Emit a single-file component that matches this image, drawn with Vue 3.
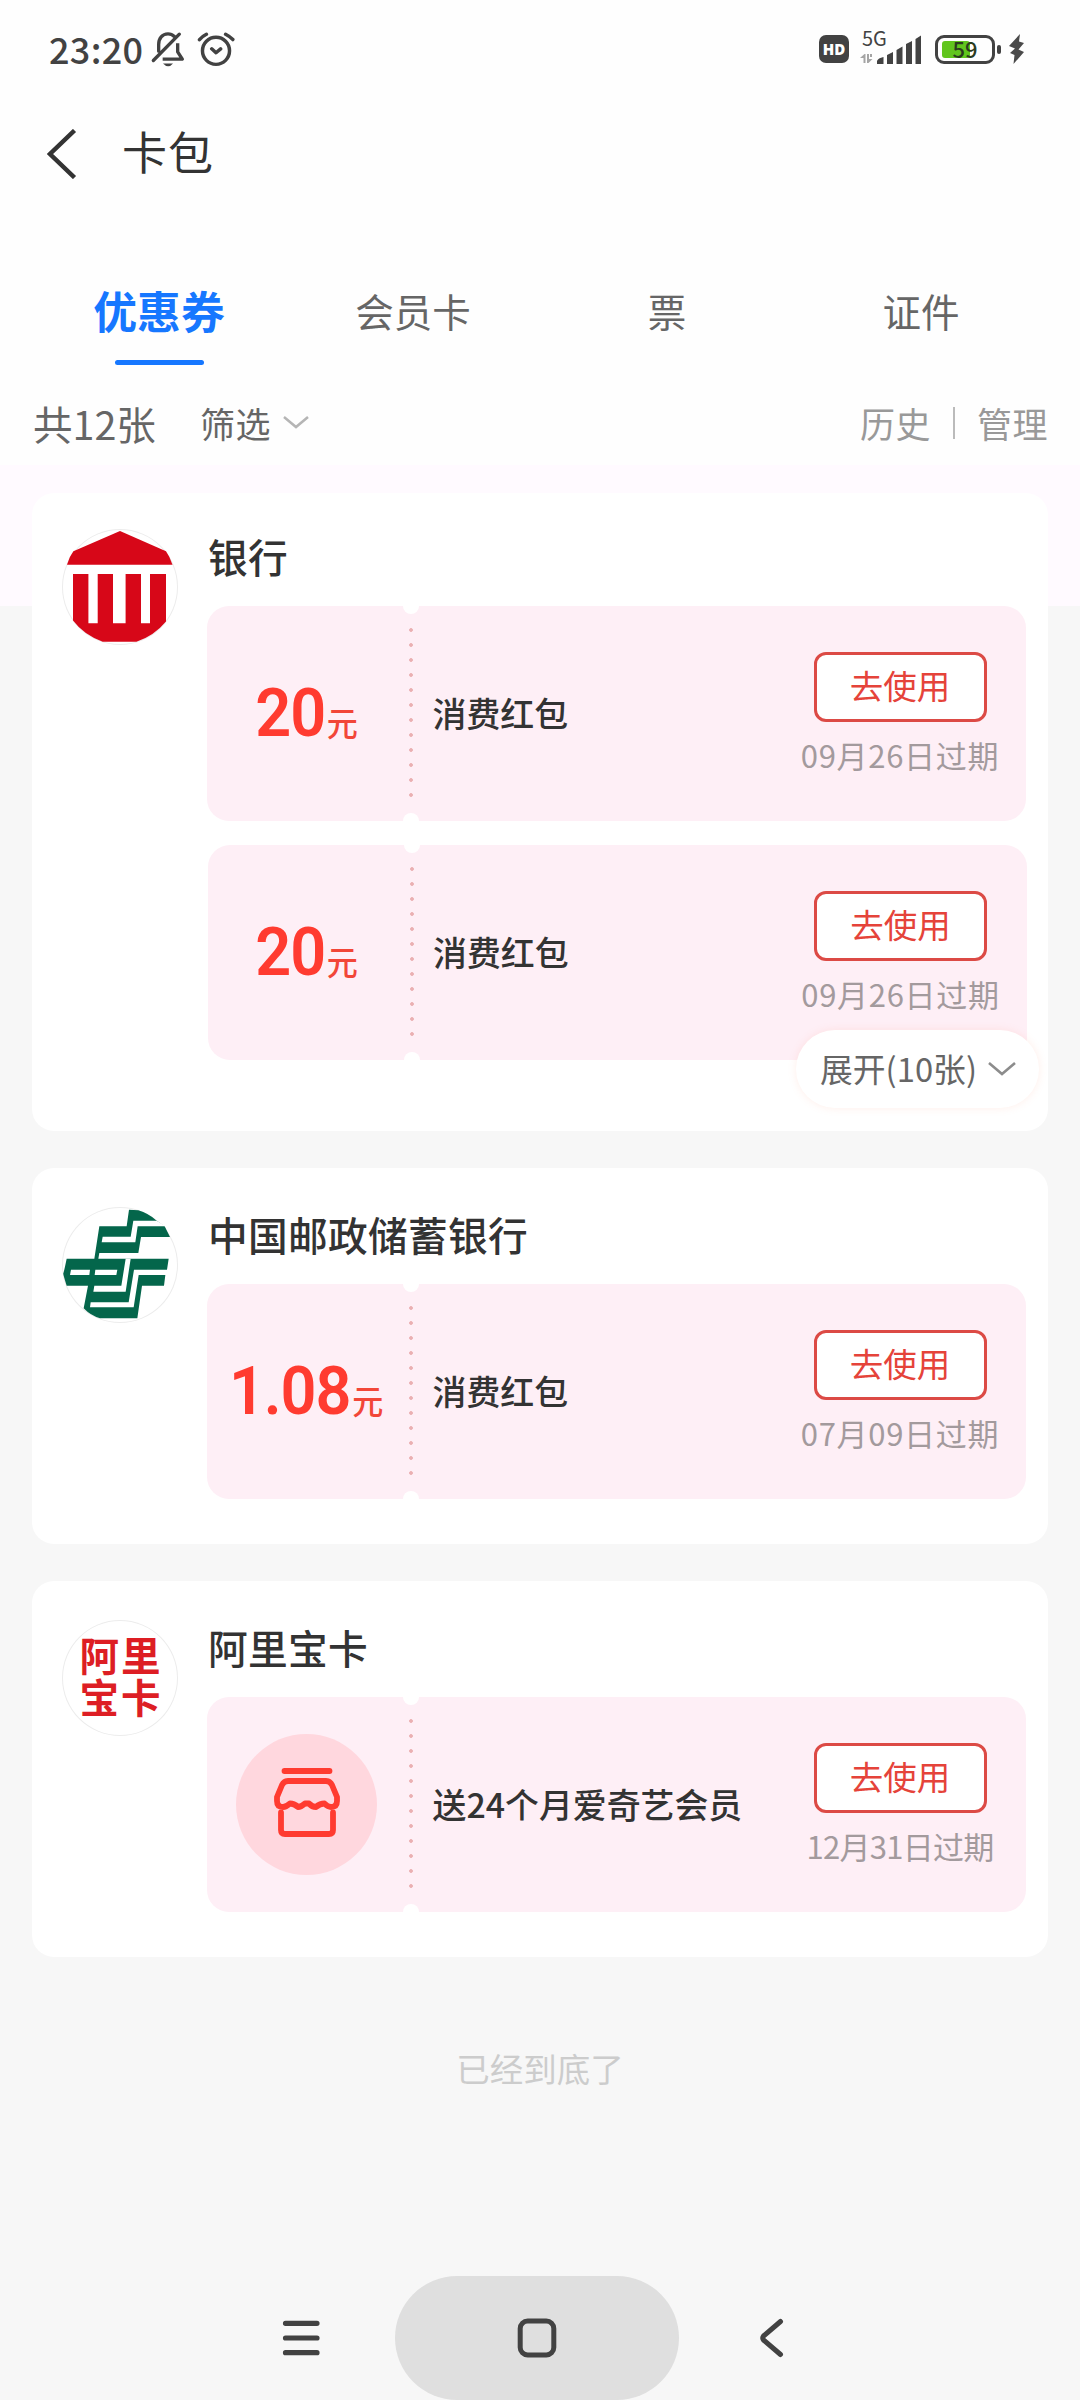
<script setup>
const tabs = ['优惠券', '会员卡', '票', '证件']
const groups = [
  {
    logo: 'bank',
    name: '银行',
    more: '展开(10张)',
    coupons: [
      { amount: '20', title: '消费红包', expire: '09月26日过期' },
      { amount: '20', title: '消费红包', expire: '09月26日过期' },
    ],
  },
  {
    logo: 'post',
    name: '中国邮政储蓄银行',
    coupons: [{ amount: '1.08', title: '消费红包', expire: '07月09日过期' }],
  },
  {
    logo: 'ali',
    name: '阿里宝卡',
    coupons: [{ title: '送24个月爱奇艺会员', expire: '12月31日过期', tight: true }],
  },
]
</script>

<template>
  <div class="screen">
    <header class="status">
      <span class="clock">23:20</span>
      <svg class="bell" viewBox="15 20 105 110" fill="none" stroke="#424242" stroke-width="10" stroke-linecap="round" stroke-linejoin="round">
        <path d="M41 80V60C41 41 52 28 69 28Q80 28 88 36M25 108L103 29" />
        <path d="M98 56V82L112 104H53" stroke-linecap="butt" />
        <path d="M54 117H84Q70 134 54 117Z" fill="#424242" stroke="none" />
      </svg>
      <svg class="alarm" viewBox="156 20 114 106" fill="none" stroke="#424242" stroke-width="10.500" stroke-linecap="round" stroke-linejoin="round">
        <circle cx="213" cy="77" r="41" />
        <path d="M163 43Q172 33 184 27M242 27Q254 33 264 43M200 71L213 83L227 71" />
      </svg>
      <span class="spacer"></span>
      <span class="hd">HD</span>
      <span class="signal">
        <span class="gen">5G</span>
        <svg viewBox="0 0 62 32" width="62" height="32">
          <g fill="#a5a5a5">
            <path d="M0 25L4.500 21H5.500V30H3.500V25ZM7 21H9V26H12.500L8.500 30H7ZM10 21H12V24H10Z" />
          </g>
          <g fill="#424242">
            <path d="M17 28Q18 25 23.500 24V31H17ZM27 22L33 19V31H27ZM36.500 17L42.500 13.500V31H36.500ZM46 11L52 8V31H46ZM55.500 6L61 2.500V31H55.500Z" />
          </g>
        </svg>
      </span>
      <span class="battery"><span class="charge"></span><span class="percent">59</span></span>
      <span class="nub"></span>
      <svg class="bolt" viewBox="0 0 18 30" fill="#4a4a4a"><path d="M12 0L1 12L7 14.500L2 19L6.500 21L5.500 30L16 18L10.500 15.500L16 9L11 7.500Z" /></svg>
    </header>

    <nav class="titlebar">
      <svg class="back" viewBox="0 0 30 50" fill="none" stroke="#333" stroke-width="4.500"><path d="M27.500 1.500L3 25L27.500 48.500" /></svg>
      <h1>卡包</h1>
    </nav>

    <div class="tabs">
      <div v-for="(tab, i) in tabs" :key="tab" class="tab" :class="{ active: i === 0 }">
        <span>{{ tab }}</span>
      </div>
    </div>

    <div class="filter">
      <span class="total">共12张</span>
      <span class="pick">筛选</span>
      <svg class="caret" viewBox="0 0 26 13" fill="none" stroke="#b5b5b5" stroke-width="2.500"><path d="M1 1L13 11L25 1" /></svg>
      <span class="spacer"></span>
      <span class="link">历史</span>
      <span class="bar"></span>
      <span class="link">管理</span>
    </div>

    <main class="list">
      <section v-for="group in groups" :key="group.name" class="card" :class="{ multi: group.more }">
        <div class="logo">
          <svg v-if="group.logo === 'bank'" viewBox="0 0 116 116" fill="#d70718">
            <path d="M58 2L104 22.300Q108 28 110.500 35.700H5Q7 28 11.400 22.300Z" />
            <path d="M11 45H26.400V94.300H35.700V45H51V94.300H63.600V45H79V94.300H88V45H104V92.500Q92 107 74.500 112.700H40.700Q22 106 11 91.500Z" />
          </svg>
          <svg v-else-if="group.logo === 'post'" viewBox="6 6 348 348">
            <path fill="#04664b" d="M207 14L235 16Q265 25 290 47L314 64L330 96H243L235 144H118L115 161H326L321 194L316 210L312 242H246L232 340H120Q92 332 71 310L84 242H20Q8 205 10 205Q12 200 20 161H103L118 64H200Z" />
            <g fill="#fff">
              <path d="M290 47H220L212 95H128L125 112H226L233 64H318Z" />
              <path d="M197 161H212L197 260H100L103 242H184Z" />
              <path d="M325 194H222L206 292H92L90 307H221L236 210H325Z" />
              <path d="M33 194H90L88 210H30ZM106 194H172L169 210H104Z" />
            </g>
          </svg>
          <span v-else class="wordmark"><span>阿里</span><span>宝卡</span></span>
        </div>
        <div class="content">
          <h2>{{ group.name }}</h2>
          <div class="coupons">
            <article v-for="(coupon, i) in group.coupons" :key="i" class="coupon">
              <div class="value">
                <div v-if="coupon.amount" class="price">
                  <span class="amount">{{ coupon.amount }}</span><span class="unit">元</span>
                </div>
                <span v-else class="shop">
                  <svg viewBox="0 0 70 74" width="70" height="74" fill="none" stroke="#ff3b30" stroke-width="5.800" stroke-linecap="round" stroke-linejoin="round">
                    <path d="M12.500 3H57.500" />
                    <path d="M16 13H54Q58 13 60 17L65 29V33Q65 39 59 39Q56 39 52.500 35.500Q48 35.500 44 39Q40 39 37 35.500H33Q29 39 26 39Q22 35.500 18 35.500Q14 39 11 39Q5 39 5 33V29L10 17Q12 13 16 13Z" />
                    <path d="M9 44.500V62Q9 66 13 66H57Q61 66 61 62V44.500" />
                  </svg>
                </span>
              </div>
              <div class="dots"></div>
              <div class="title">{{ coupon.title }}</div>
              <div class="action">
                <button type="button">去使用</button>
                <span class="expire" :class="{ tight: coupon.tight }">{{ coupon.expire }}</span>
              </div>
            </article>
          </div>
        </div>
        <div v-if="group.more" class="more">
          <span>{{ group.more }}</span>
          <svg viewBox="0 0 28 14" width="28" height="14" fill="none" stroke="#8c8c8c" stroke-width="2.600"><path d="M1 1L14 12L27 1" /></svg>
        </div>
      </section>
      <p class="end">已经到底了</p>
    </main>

    <footer class="sysnav">
      <svg viewBox="0 0 38 40" width="38" height="40" fill="none" stroke="#424242" stroke-width="5.200" stroke-linecap="round"><path d="M3.500 5.300H35M3.500 20H35M3.500 34.700H35" /></svg>
      <div class="home">
        <svg viewBox="0 0 40 40" width="40" height="40" fill="none" stroke="#424242" stroke-width="5"><rect x="3.200" y="3" width="33.600" height="34" rx="7.500" /></svg>
      </div>
      <svg viewBox="0 0 25 40" width="25" height="40" fill="none" stroke="#424242" stroke-width="5" stroke-linecap="round" stroke-linejoin="round"><path d="M21.500 3.500L4.500 18Q3 20 4.500 22L21.500 36.500" /></svg>
    </footer>
  </div>
</template>

<style>
body {
  margin: 0;
}
</style>

<style scoped>
.screen {
  box-sizing: border-box;
  display: flex;
  flex-direction: column;
  width: 1080px;
  height: 2400px;
  overflow: hidden;
  background: #fefefe;
  color: #333;
  font-family: "Noto Sans CJK SC", sans-serif;
}
.spacer {
  flex: 1;
}
.status {
  display: flex;
  align-items: center;
  height: 98px;
  padding: 0 54px 0 49px;
  color: #424242;
}
.clock {
  width: 101px;
  padding-bottom: 3px;
  font-size: 36px;
  font-weight: 500;
  letter-spacing: 0.3px;
}
.bell {
  width: 35px;
  height: 37px;
}
.alarm {
  width: 38px;
  height: 35px;
  margin-left: 12px;
}
.hd {
  width: 30px;
  height: 28px;
  border-radius: 7px;
  background: #424242;
  color: #fff;
  font: 800 15px/28px "Open Sans", sans-serif;
  text-align: center;
}
.signal {
  position: relative;
  width: 62px;
  height: 32px;
  margin-left: 11px;
}
.gen {
  position: absolute;
  left: 2px;
  top: -6px;
  font-size: 20px;
  line-height: 22px;
}
.battery {
  position: relative;
  box-sizing: border-box;
  width: 60px;
  height: 29px;
  margin-left: 13px;
  padding: 3px 4px;
  border: 3px solid #424242;
  border-radius: 9px;
}
.charge {
  display: block;
  width: 28px;
  height: 17px;
  border-radius: 3px;
  background: #61c51d;
}
.percent {
  position: absolute;
  inset: 0;
  color: #2b3b1e;
  font: 500 22px/21px "Noto Sans CJK SC", sans-serif;
  text-align: center;
}
.nub {
  width: 4px;
  height: 9px;
  margin-left: 2px;
  border-radius: 2px;
  background: #424242;
}
.bolt {
  width: 18px;
  height: 30px;
  margin-left: 7px;
}
.titlebar {
  display: flex;
  align-items: center;
  height: 112px;
  padding-left: 47px;
}
.back {
  width: 30px;
  height: 50px;
}
h1 {
  margin: 0 0 6px 45px;
  font-size: 45px;
  font-weight: 400;
  line-height: 60px;
  letter-spacing: 1px;
}
.tabs {
  display: flex;
  height: 161px;
  padding: 0 32px;
  align-items: flex-end;
}
.tab {
  box-sizing: border-box;
  display: flex;
  flex: 1;
  flex-direction: column;
  align-items: center;
  height: 98px;
  color: #666;
  font-size: 38.5px;
  line-height: 75px;
}
.tab.active {
  color: #1677ff;
  font-size: 43.8px;
  font-weight: 700;
}
.tab.active::after {
  width: 89px;
  height: 5px;
  margin-top: 12px;
  border-radius: 3px;
  background: #1677ff;
  content: "";
}
.filter {
  display: flex;
  align-items: center;
  height: 94px;
  box-sizing: border-box;
  padding: 9px 32px 0 33px;
  color: #666;
  font-size: 35px;
  line-height: 60px;
}
.total {
  width: 167px;
  font-size: 39.5px;
}
.pick {
  letter-spacing: 0.5px;
}
.caret {
  width: 26px;
  height: 13px;
  margin: 0 0 0 12px;
}
.link {
  color: #999;
  letter-spacing: 0.5px;
}
.bar {
  width: 2px;
  height: 32px;
  margin: 0 22px;
  background: #bbb;
}
.list {
  flex: 1;
  display: flex;
  flex-direction: column;
  gap: 37px;
  padding: 28px 32px 0;
  background: linear-gradient(#fffaff 141px, #f7f7f7 141px);
}
.card {
  position: relative;
  box-sizing: border-box;
  display: flex;
  height: 376px;
  padding: 39px 22px 0 30px;
  border-radius: 22px;
  background: #fff;
}
.card.multi {
  height: 638px;
  padding-top: 36px;
}
.logo {
  position: relative;
  display: flex;
  flex: none;
  align-items: center;
  justify-content: center;
  width: 116px;
  height: 116px;
  border-radius: 50%;
  box-shadow: inset 0 0 0 1px #ececec;
}
.logo svg {
  width: 116px;
  height: 116px;
}
.wordmark {
  display: flex;
  flex-direction: column;
  padding: 0 0 1px 2px;
  color: #dd1e24;
  font-family: "Liberation Sans", "Noto Sans CJK SC", sans-serif;
  font-size: 39.5px;
  font-weight: 700;
  letter-spacing: 2px;
}
.wordmark span {
  height: 42px;
  line-height: 42px;
}
.content {
  flex: 1;
  margin-left: 29px;
}
h2 {
  height: 77px;
  margin: 0 0 0 1px;
  font-size: 39.7px;
  font-weight: 500;
  line-height: 54px;
  letter-spacing: 0.3px;
}
.coupons {
  display: flex;
  flex-direction: column;
  gap: 24px;
}
.coupon {
  position: relative;
  display: flex;
  align-items: center;
  height: 215px;
  border-radius: 22px;
  background: #feeff6;
}
.coupon + .coupon {
  left: 0.5px;
}
.coupon::before,
.coupon::after {
  position: absolute;
  left: 196px;
  width: 16px;
  height: 16px;
  border-radius: 50%;
  background: #fff;
  content: "";
}
.coupon::before {
  top: -8px;
}
.coupon::after {
  bottom: -8px;
}
.value {
  display: flex;
  align-items: center;
  justify-content: center;
  width: 202px;
}
.price {
  display: flex;
  align-items: baseline;
  margin-left: -3px;
  padding-bottom: 2px;
  color: #ff3b30;
  white-space: nowrap;
  transform: scaleX(0.94);
}
.amount {
  font: 600 67px/80px Roboto, sans-serif;
  letter-spacing: -1.2px;
}
.unit {
  margin-left: 2px;
  color: #f24638;
  font-size: 33px;
  font-weight: 500;
  line-height: 40px;
}
.shop {
  display: flex;
  align-items: center;
  justify-content: center;
  width: 141px;
  height: 141px;
  margin-left: -3px;
  border-radius: 50%;
  background: #ffd7de;
}
.dots {
  width: 4px;
  height: 182px;
  background: radial-gradient(circle at 2px 7px, #eab0b2 1.5px, transparent 2.2px) 0 0 / 4px 15px;
}
.title {
  flex: 1;
  margin: 0 0 3px 19.5px;
  font-size: 33.9px;
  font-weight: 500;
}
.action {
  display: flex;
  flex-direction: column;
  align-items: center;
  width: 200px;
  margin: 0 26px 0 0;
}
button {
  box-sizing: border-box;
  width: 173px;
  height: 70px;
  padding: 0 0 3px;
  border: 3px solid #dc4a45;
  border-radius: 12px;
  background: #fff;
  color: #e5433a;
  font: 400 33.5px/60px "Noto Sans CJK SC", sans-serif;
}
.expire {
  margin: 13px 0 1px;
  color: #a39a9d;
  font-size: 31px;
  line-height: 40px;
  letter-spacing: 0.7px;
  white-space: nowrap;
}
.expire.tight {
  letter-spacing: -0.7px;
}
.more {
  position: absolute;
  right: 9px;
  bottom: 23px;
  display: flex;
  align-items: center;
  box-sizing: border-box;
  width: 243px;
  height: 78px;
  padding: 0 0 1px 24px;
  gap: 11px;
  border-radius: 39px;
  background: #fff;
  box-shadow: 0 0 9px rgba(255, 150, 120, 0.16);
  color: #666;
  font-size: 32.8px;
}
.more span {
  padding-bottom: 2px;
}
.end {
  margin: 54px 0 0;
  color: #ccc;
  font-size: 33.5px;
  line-height: 40px;
  text-align: center;
}
.sysnav {
  display: flex;
  align-items: center;
  height: 124px;
  padding-left: 282px;
  background: #f7f7f7;
}
.home {
  display: flex;
  align-items: center;
  justify-content: center;
  width: 284px;
  height: 124px;
  margin: 0 80px 0 75px;
  border-radius: 62px;
  background: #dfdfdf;
}
</style>
